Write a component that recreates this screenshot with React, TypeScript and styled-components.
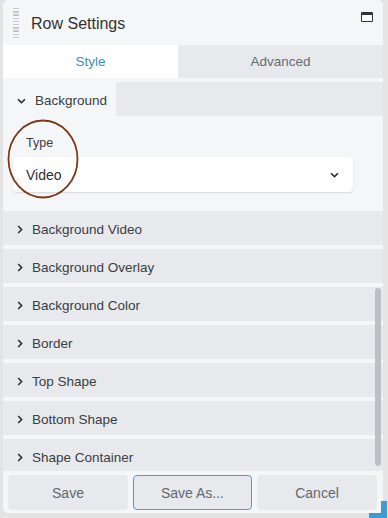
import React from 'react';
import styled, { createGlobalStyle } from 'styled-components';

const GlobalStyle = createGlobalStyle`
  html, body {
    margin: 0;
    padding: 0;
    background: #e4e4e5;
    font-family: "Liberation Sans", Arial, sans-serif;
  }
  * { box-sizing: border-box; }
`;

const Page = styled.div`
  position: relative;
  width: 388px;
  height: 518px;
  overflow: hidden;
`;

const Panel = styled.div`
  position: relative;
  margin-left: 3px;
  width: 380px;
  height: 513px;
  background: #f5f6f8;
  border-radius: 6px;
  overflow: hidden;
  display: flex;
  flex-direction: column;
`;

const Header = styled.div`
  height: 45px;
  display: flex;
  align-items: center;
  padding: 0 10px 0 10px;
  background: #f5f6f8;
`;

const Grip = styled.div`
  width: 6px;
  height: 30px;
  margin: 1px 12px 0 0;
  background: repeating-linear-gradient(
    to bottom,
    #c3c8cf 0,
    #c3c8cf 1.5px,
    transparent 1.5px,
    transparent 3.2px
  );
`;

const Title = styled.div`
  flex: 1;
  font-size: 16px;
  color: #333;
  padding-top: 2px;
`;

const MaxIcon = styled.div`
  width: 12px;
  height: 10px;
  border: 1px solid #333;
  border-top-width: 3px;
  border-radius: 1px;
  background: #fff;
  margin: 0 0 11px 0;
`;

const Tabs = styled.div`
  display: grid;
  grid-template-columns: 175px 1fr;
  height: 33px;
  background: #e7e9ed;
`;

const Tab = styled.div<{ $active?: boolean }>`
  display: flex;
  align-items: center;
  justify-content: center;
  font-size: 13.5px;
  background: ${(p) => (p.$active ? '#fff' : '#e7e9ed')};
  color: ${(p) => (p.$active ? '#3d8fc3' : '#676c73')};
`;

const Body = styled.div`
  position: relative;
  flex: 1;
  min-height: 0;
  padding-top: 4px;
  display: flex;
  flex-direction: column;
  gap: 4px;
  overflow: hidden;
`;

const OpenHead = styled.div`
  display: flex;
  height: 34px;
  background: #e7e9ed;
`;

const OpenTab = styled.div`
  display: flex;
  align-items: center;
  gap: 9px;
  width: 113px;
  padding: 3px 0 0 14px;
  background: #f5f6f8;
  font-size: 13.5px;
  color: #3a3d42;
`;

const Fields = styled.div`
  position: relative;
  padding: 20px 0 15px 10px;
`;

const Label = styled.div`
  font-size: 12.5px;
  line-height: 14px;
  color: #3a3d42;
  padding-left: 13px;
  margin-bottom: 7px;
`;

const Select = styled.div`
  width: 340px;
  height: 35px;
  background: #fff;
  border-radius: 4px;
  box-shadow: 0 1px 2px rgba(0, 0, 0, 0.12);
  display: flex;
  align-items: center;
  justify-content: space-between;
  padding: 1px 14px 0 13px;
  font-size: 14px;
  color: #2d3034;
`;

const Mark = styled.svg`
  position: absolute;
  left: 2px;
  top: 2px;
  pointer-events: none;
`;

const Row = styled.div`
  display: flex;
  align-items: center;
  gap: 9px;
  height: 34px;
  flex-shrink: 0;
  padding: 3px 0 0 14px;
  background: #e7e9ed;
  font-size: 13.5px;
  color: #3a3d42;
`;

const Thumb = styled.div`
  position: absolute;
  right: 2px;
  top: 210px;
  width: 6px;
  height: 178px;
  border-radius: 3px;
  background: #bcbfc6;
`;

const Footer = styled.div`
  display: grid;
  grid-template-columns: 120px 119px 120px;
  gap: 5px;
  padding: 4px 5px 3px 5px;
  background: #f5f6f8;
`;

const Button = styled.div<{ $focus?: boolean }>`
  height: 35px;
  display: flex;
  align-items: center;
  justify-content: center;
  border-radius: 4px;
  background: #e7e9ed;
  border: ${(p) => (p.$focus ? '1.5px solid #4b9fd0' : 'none')};
  font-size: 14px;
  color: #63686f;
`;

const Resize = styled.div`
  position: absolute;
  right: 1px;
  bottom: 0;
  width: 18px;
  height: 17px;
  border-right: 6px solid #3f9bd0;
  border-bottom: 5px solid #3f9bd0;
`;

const ChevronRight = () => (
  <svg width="6" height="9" viewBox="0 0 6 9">
    <polyline points="1.2,1 4.6,4.5 1.2,8" fill="none" stroke="#2b2e33" strokeWidth="1.6" />
  </svg>
);

const ChevronDown = () => (
  <svg width="9" height="6" viewBox="0 0 9 6">
    <polyline points="1,1.2 4.5,4.6 8,1.2" fill="none" stroke="#2b2e33" strokeWidth="1.6" />
  </svg>
);

const sections = [
  'Background Video',
  'Background Overlay',
  'Background Color',
  'Border',
  'Top Shape',
  'Bottom Shape',
  'Shape Container',
];

export default function App() {
  return (
    <Page>
      <GlobalStyle />
      <Panel>
        <Header>
          <Grip />
          <Title>Row Settings</Title>
          <MaxIcon />
        </Header>
        <Tabs>
          <Tab $active>Style</Tab>
          <Tab>Advanced</Tab>
        </Tabs>
        <Body>
          <div>
            <OpenHead>
              <OpenTab>
                <ChevronDown />
                Background
              </OpenTab>
            </OpenHead>
            <Fields>
              <Label>Type</Label>
              <Select>
                Video
                <ChevronDown />
              </Select>
              <Mark width="76" height="82" viewBox="0 0 76 82">
                <ellipse cx="38" cy="41" rx="34.5" ry="38.5" fill="none" stroke="#7a3a1a" strokeWidth="1.8" />
              </Mark>
            </Fields>
          </div>
          {sections.map((s) => (
            <Row key={s}>
              <ChevronRight />
              {s}
            </Row>
          ))}
          <Thumb />
        </Body>
        <Footer>
          <Button>Save</Button>
          <Button $focus>Save As...</Button>
          <Button>Cancel</Button>
        </Footer>
      </Panel>
      <Resize />
    </Page>
  );
}
